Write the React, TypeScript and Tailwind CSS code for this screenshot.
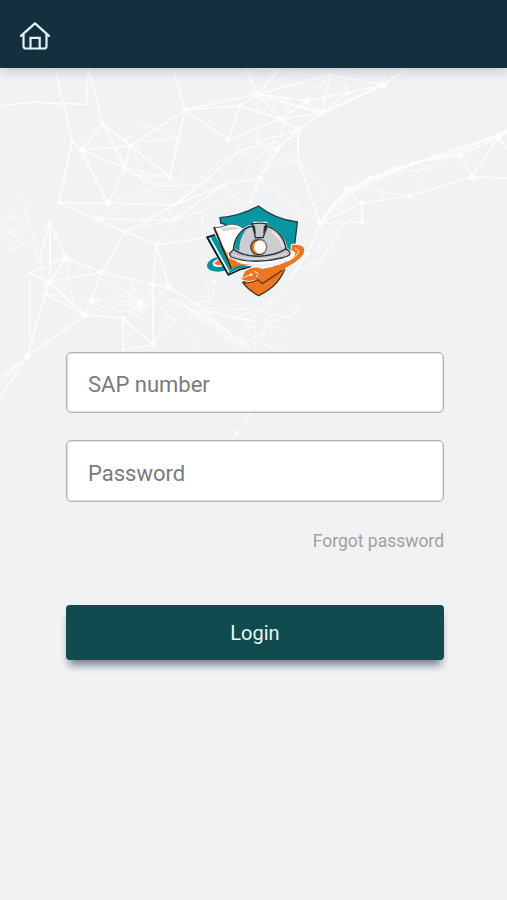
import React from "react";

const strongLines = [
  "M55 68 61 95 64 104 72 141",
  "M0 106 34 102 64 104 87 104 88 68 103 124 81 150 72 141 59 203 98 219 125 232 157 244",
  "M81 150 130 146 103 124 170 177M81 150 125 168 157 186M103 124 125 168M130 146 125 168M81 150 108 203 125 168",
  "M59 203 108 203 175 205M98 219 175 220 202 211M125 232 175 205 223 185",
  "M173 68 185 110 170 177M185 110 178 138 170 177M185 110 240 106 258 94 185 110 228 140 240 106M130 146 185 110",
  "M157 186 200 185 240 150 277 142M200 185 175 205M223 185 260 178M175 219 223 185",
  "M245 68 258 94 306 101 322 113 281 119 258 94 280 68",
  "M322 113 347 93 383 85 322 113 298 130 277 150 260 178 250 203",
  "M383 85 330 75 258 94M330 75 322 113M281 119 306 101 347 93M383 85 407 69",
  "M228 140 281 119 298 130 257 142 277 150M281 119 240 106",
  "M298 130 298 160 320 223 347 189 370 178 413 163 460 155 498 138 507 132",
  "M347 189 395 168 460 152 507 130M362 203 410 196 472 177 507 178M472 177 498 138 507 148M460 155 472 177",
  "M320 223 362 203 362 222 320 223 312 245 290 280",
  "M50 223 66 258 30 273 49 282 85 315 123 318 153 345 123 350 123 318",
  "M50 223 38 262M50 223 50 282 66 258 102 272 153 285 169 287 156 245 153 285",
  "M27 357 85 315 102 272 49 282M27 357 0 378M27 357 0 397",
  "M102 272 125 232M156 245 202 238M27 357 49 282M45 294 85 315",
  "M153 285 153 345M169 287 210 313 255 322",
];

const faintLines = [
  "M30 273 30 357M125 140 142 125 160 130 178 138 145 142M130 146 160 195 175 205 200 185M120 155 150 190 175 219",
  "M108 203 157 186 185 175M125 168 170 177 130 175 160 205M98 219 157 186M125 232 175 219 157 244",
  "M175 205 223 158 258 150M223 185 240 203M202 211 203 238 220 225M202 211 230 195 260 212",
  "M250 140 280 160 298 160 260 170M240 150 270 165M245 170 275 140 260 180 320 223",
  "M298 160 330 200M277 150 298 130 258 110M258 94 258 142M250 92 290 100 277 150",
  "M310 75 260 68M330 75 350 92M383 85 386 68M306 101 330 75 345 69",
  "M322 220 335 200 365 183 398 173 433 168 410 196 370 190 347 189 362 203",
  "M330 215 355 190 385 178 413 163M338 215 350 195 362 203M433 168 460 155M413 163 433 168",
  "M320 223 335 245 310 270M345 225 320 260 295 270M362 210 315 250 280 270M325 235 350 220 300 262",
  "M15 190 30 205 25 215 0 222M25 215 38 245 35 258M0 228 20 238 5 250 28 245M2 235 30 222M25 248 3 222 17 210",
  "M40 258 45 294 90 302 123 295 145 308 175 298M90 302 120 312 145 308M102 272 145 308 123 318",
  "M85 315 135 290 175 320 153 345 123 318M130 282 145 308 153 285M169 287 140 308",
  "M153 345 170 305 215 325 240 350M180 300 205 322 240 345 255 325 255 350M210 313 215 280",
  "M175 310 200 350M190 310 220 312 285 330M200 320 250 350M205 308 260 310 290 290M165 320 210 313",
  "M210 315 235 352 265 330M255 322 240 340 290 350M180 298 165 320M205 280 210 300 190 305",
  "M237 433 250 413M0 385 27 357M66 258 75 315M66 258 120 290",
  "M90 308 105 298 118 305 133 292 142 305 128 310 140 318M92 314 120 306 145 300M125 300 150 318",
  "M262 305 282 296 300 312 270 322 255 345M255 310 290 318 300 305M240 330 270 300 262 345M230 320 250 312",
];

const nodes = [
  [64, 104, 2], [34, 102, 1.5], [61, 95, 1.5], [87, 104, 1.5], [103, 124, 2.2], [72, 141, 2], [81, 150, 3],
  [130, 146, 2.3], [125, 168, 2.3], [170, 177, 2.6], [59, 203, 2.2], [108, 203, 3], [98, 219, 2.7],
  [125, 232, 2.3], [157, 244, 2.3], [175, 219, 2.5], [185, 110, 3], [228, 140, 2.6], [240, 106, 2.4],
  [258, 94, 3], [306, 101, 2.8], [322, 113, 3.2], [281, 119, 2.4], [298, 130, 3], [383, 85, 3.4],
  [330, 75, 2.5], [347, 93, 2.3], [277, 150, 2.7], [298, 160, 2], [260, 178, 3], [320, 223, 3],
  [362, 203, 2.8], [362, 222, 2.2], [410, 196, 2.5], [472, 177, 3.4], [498, 138, 3.3], [460, 155, 3.3],
  [347, 189, 2.4], [370, 178, 2.5], [413, 163, 2.4], [223, 185, 2.2], [50, 223, 2.7], [66, 258, 3.3],
  [30, 273, 2], [49, 282, 3.3], [102, 272, 2.2], [85, 315, 3], [123, 318, 2.3], [153, 345, 2.3],
  [123, 350, 1.7], [153, 285, 2.7], [169, 287, 3.2], [27, 357, 3.2], [237, 433, 2.5], [140, 303, 3.4],
  [215, 281, 2.2], [93, 300, 2.5],
];

function NetworkBackdrop() {
  return (
    <svg
      className="pointer-events-none absolute left-0 top-0 h-[900px] w-[507px]"
      viewBox="0 0 507 900"
      fill="none"
      stroke="#fff"
      strokeLinejoin="round"
      aria-hidden="true"
    >
      <path d={strongLines.join("")} strokeWidth="1.7" opacity=".78" />
      <path d={faintLines.join("")} strokeWidth="1.3" opacity=".55" />
      <path
        d="M320 223Q340 192 378 177T507 133M258 95 322 113 383 85M170 300 215 322 245 345"
        strokeWidth="3"
        opacity=".6"
      />
      <g fill="#fff" stroke="none" opacity=".85">
        {nodes.map(([x, y, r]) => (
          <circle key={`${x}-${y}`} cx={x} cy={y} r={r} />
        ))}
      </g>
    </svg>
  );
}

function HomeIcon() {
  return (
    <svg
      className="h-[30px] w-8"
      viewBox="0 0 32 30"
      fill="none"
      stroke="#e2f3f8"
      strokeWidth="2.2"
      strokeLinecap="round"
      strokeLinejoin="round"
    >
      <path d="M2 14.9 16 2.4 30 14.9" />
      <path d="M4.5 13.8V25.3a2.2 2.2 0 0 0 2.2 2.2H25.3a2.2 2.2 0 0 0 2.2-2.2V13.8" />
      <path d="M11.5 27.5V16.9H20.7V27.5" strokeLinejoin="miter" />
    </svg>
  );
}

function Logo() {
  return (
    <svg className="relative h-[110px] w-[120px]" viewBox="0 0 360 330" fill="none">
      {/* shield */}
      <path
        d="M77 84 75 68C123 64 158 51 190 33 223 59 264 76 307 81L299 150 276 176 110 160 90 88Z"
        fill="#0797a2"
        stroke="#243c43"
        strokeWidth="4"
      />
      <path
        d="M143 262C156 280 172 292 191 302 230 284 262 254 275 206L200 228Z"
        fill="#ef7620"
        stroke="#3c2f2b"
        strokeWidth="4"
      />
      {/* left side of the ring */}
      <path d="M66 187C36 194 27 216 46 226 60 232 78 231 94 226L84 214C66 219 53 214 54 207 56 201 63 198 72 198Z" fill="#08929f" />
      <path d="M52 207C54 198 62 193 73 193L82 211C68 215 57 213 52 207Z" fill="#fff" />
      <path d="M58 204 70 195 79 209C70 212 61 210 58 204Z" fill="#ef7620" />
      {/* books */}
      <path d="M35 128 60 120 118 224 100 240Z" fill="#08929f" />
      <path d="M42 129 50 127 105 230 100 234Z" fill="#fff" />
      <path d="M47 128 60 122 111 225 104 230Z" fill="#08929f" />
      <path d="M60 119 36 127 100 240 133 224 168 215" stroke="#101719" strokeWidth="5" />
      <path d="M57 97C84 101 98 86 116 88 133 90 142 97 148 106L119 168 103 180 124 203 166 212 107 226Z" fill="#fff" />
      <path d="M66 106C72 135 91 167 104 187L122 197C134 208 152 208 163 208L140 212 112 221 104 209Z" fill="#ef7620" />
      <path d="M78 100C100 94 121 92 137 103 121 101 99 105 84 110Z" fill="#d5d7d9" />
      <path d="M56 97C83 101 96 84 117 88 129 90 137 94 142 99" stroke="#596367" strokeWidth="3" />
      <path d="M57 97 109 222" stroke="#15191a" strokeWidth="5" />
      <path d="M105 226C124 207 148 209 171 215L146 219C128 220 116 229 102 236Z" fill="#08929f" />
      {/* helmet */}
      <path
        d="M100 178C114 163 113 140 127 121 141 102 158 92 174 91L176 82H215L217 94C250 102 269 133 276 160L287 170C291 185 279 190 262 194 211 208 150 208 104 188Z"
        fill="#fff"
        stroke="#fff"
        strokeWidth="4"
      />
      <path d="M115 166C117 126 143 96 175 93L180 109H211L216 94C249 102 269 132 274 164 230 190 158 192 115 166Z" fill="#cbcdd0" stroke="#26292b" strokeWidth="4" />
      <path d="M117 158C123 126 136 109 155 101 142 117 132 139 133 168Z" fill="#07919c" />
      <path d="M103 176 116 163C158 193 228 189 274 161L284 170C288 182 278 184 260 189 209 202 151 203 108 186Z" fill="#bfc2c5" stroke="#35393b" strokeWidth="4" />
      <path d="M111 178C160 198 224 195 276 174" stroke="#e2e4e5" strokeWidth="3" />
      <path d="M231 110C249 122 260 142 264 157" stroke="#e3e4e5" strokeWidth="6" />
      <path d="M171 87C184 84 202 84 216 87L209 115 204 128H181L178 112Z" fill="#c8cacd" stroke="#292d2f" strokeWidth="4" />
      <path d="M170 87 180 94 183 118 176 108ZM216 87 207 94 204 118 211 106Z" fill="#303638" />
      <ellipse cx="191" cy="156" rx="26" ry="27" fill="#77787a" />
      <circle cx="190" cy="157" r="22" fill="#ef7620" stroke="#332c29" strokeWidth="3" />
      <ellipse cx="195" cy="156" rx="18" ry="20" fill="#fff" />
      {/* ring and fountain pen */}
      <path
        d="M291 150C320 145 335 158 325 177 309 203 268 222 226 236L194 248C177 258 157 262 139 252L150 229C166 218 184 213 200 222 241 214 278 203 296 185 304 177 303 168 289 167Z"
        fill="#ef7620"
        stroke="#fff"
        strokeWidth="6"
        strokeLinejoin="round"
        paintOrder="stroke"
      />
      <path d="M300 163C311 162 314 169 306 179 297 188 288 194 276 199" stroke="#fff" strokeWidth="3" />
      <path d="M190 250 225 235 272 215 262 233 206 272 187 256Z" fill="#ef7620" />
      <path d="M145 264C163 264 176 262 188 254L202 266 262 226" stroke="#6b3a1e" strokeWidth="4" />
      <path d="M142 249 164 240M178 229 189 235 185 246" stroke="#fff" strokeWidth="2.5" />
      <ellipse cx="168" cy="239" rx="5" ry="3.5" fill="#fff" transform="rotate(-20 168 239)" />
    </svg>
  );
}

const inputClass =
  "block w-full rounded-[5px] border border-[#b2b3b4] bg-white px-[21px] text-[22px] text-[#757575] shadow-[inset_0_0_0_1px_#e2e3e4] outline-none placeholder:text-[#7b7b7b] placeholder:opacity-100";

export default function App() {
  return (
    <div className="relative flex h-[900px] w-[507px] flex-col overflow-hidden bg-[#f0f2f4] font-[Roboto,sans-serif]">
      <NetworkBackdrop />
      <header className="relative flex h-[68px] shrink-0 items-center bg-[#142f3d] pl-[19px] pt-[3px] shadow-[0_2px_12px_rgba(20,47,61,0.25)]">
        <button type="button" aria-label="Home">
          <HomeIcon />
        </button>
      </header>
      <main className="relative flex flex-col pl-[66px] pr-[63px] pt-[127px]">
        <div className="ml-[129px] h-[110px]">
          <Logo />
        </div>
        <form className="mt-[47px] flex flex-col" onSubmit={(e) => e.preventDefault()}>
          <input className={`${inputClass} h-[61px] pt-[3px]`} placeholder="SAP number" aria-label="SAP number" />
          <input
            className={`${inputClass} mt-[27px] h-[62px] pt-1`}
            type="password"
            placeholder="Password"
            aria-label="Password"
          />
          <a className="mt-[26px] self-end text-[17.5px] leading-[26px] text-[#a0a1a1]">Forgot password</a>
          <button
            type="submit"
            className="mt-[51px] h-[55px] rounded-[4px] bg-[#104b50] pt-px text-[20px] text-[#ebf8f7] shadow-[0_8px_9px_-3px_rgba(35,48,72,0.6)]"
          >
            Login
          </button>
        </form>
      </main>
    </div>
  );
}
